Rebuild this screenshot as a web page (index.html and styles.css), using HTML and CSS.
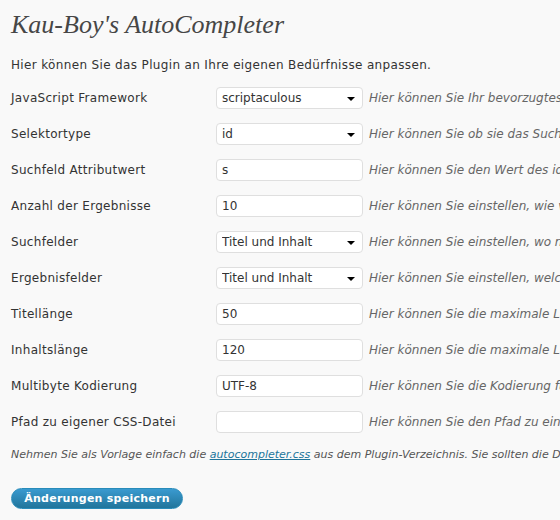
FILE: index.html
```html
<!DOCTYPE html>
<html lang="de">
  <head>
    <meta charset="UTF-8" />
    <meta name="viewport" content="width=device-width, initial-scale=1.0" />
    <title>Kau-Boy's AutoCompleter</title>
    <link rel="stylesheet" href="styles.css">
  </head>
  <body>
    <div class="wrap">
      <h2 class="title">Kau-Boy's AutoCompleter</h2>
      <p class="intro">Hier können Sie das Plugin an Ihre eigenen Bedürfnisse anpassen.</p>
      <form class="options">
        <div class="row">
          <label class="label">JavaScript Framework</label>
          <span class="select">
            <select><option>scriptaculous</option><option>jQuery</option></select>
          </span>
          <span class="desc">Hier können Sie Ihr bevorzugtes JavaScript Framework auswählen.</span>
        </div>
        <div class="row">
          <label class="label">Selektortype</label>
          <span class="select">
            <select><option>id</option><option>name</option></select>
          </span>
          <span class="desc">Hier können Sie ob sie das Suchfeld über die ID oder den Namen finden wollen.</span>
        </div>
        <div class="row">
          <label class="label">Suchfeld Attributwert</label>
          <input class="text" type="text" value="s" />
          <span class="desc">Hier können Sie den Wert des id-Attributs Ihres Suchfeldes eintragen.</span>
        </div>
        <div class="row">
          <label class="label">Anzahl der Ergebnisse</label>
          <input class="text" type="text" value="10" />
          <span class="desc">Hier können Sie einstellen, wie viele Ergebnisse angezeigt werden sollen.</span>
        </div>
        <div class="row">
          <label class="label">Suchfelder</label>
          <span class="select">
            <select><option>Titel und Inhalt</option><option>Titel</option></select>
          </span>
          <span class="desc">Hier können Sie einstellen, wo nach dem Suchbegriff gesucht werden soll.</span>
        </div>
        <div class="row">
          <label class="label">Ergebnisfelder</label>
          <span class="select">
            <select><option>Titel und Inhalt</option><option>Titel</option></select>
          </span>
          <span class="desc">Hier können Sie einstellen, welche Felder angezeigt werden sollen.</span>
        </div>
        <div class="row">
          <label class="label">Titellänge</label>
          <input class="text" type="text" value="50" />
          <span class="desc">Hier können Sie die maximale Länge des Titels einstellen.</span>
        </div>
        <div class="row">
          <label class="label">Inhaltslänge</label>
          <input class="text" type="text" value="120" />
          <span class="desc">Hier können Sie die maximale Länge des Inhalts einstellen.</span>
        </div>
        <div class="row">
          <label class="label">Multibyte Kodierung</label>
          <input class="text" type="text" value="UTF-8" />
          <span class="desc">Hier können Sie die Kodierung für die Multibyte-Funktionen einstellen.</span>
        </div>
        <div class="row">
          <label class="label">Pfad zu eigener CSS-Datei</label>
          <input class="text" type="text" value="" />
          <span class="desc">Hier können Sie den Pfad zu einer eigenen CSS-Datei angeben.</span>
        </div>
        <p class="note">Nehmen Sie als Vorlage einfach die <a href="#">autocompleter.css</a> aus dem Plugin-Verzeichnis. Sie sollten die Datei kopieren.</p>
        <button class="button-primary" type="button">Änderungen speichern</button>
      </form>
    </div>
  </body>
</html>
```

FILE: styles.css
```css
* {
  margin: 0;
  padding: 0;
  box-sizing: border-box;
}
body {
  background-color: #f9f9f9;
  color: #333;
  font-family: "DejaVu Sans", Verdana, sans-serif;
  font-size: 12px;
  overflow: hidden;
}
.wrap {
  padding: 0 11px;
  white-space: nowrap;
}
.title {
  font-family: "Liberation Serif", Georgia, serif;
  font-style: italic;
  font-weight: normal;
  font-size: 26px;
  color: #464646;
  padding-top: 10px;
  height: 50px;
}
.intro {
  height: 30px;
  line-height: 30px;
  letter-spacing: 0.35px;
}
.row {
  display: flex;
  align-items: center;
  height: 36px;
}
.label {
  width: 205px;
  flex-shrink: 0;
  letter-spacing: 0.3px;
}
.text,
.select select {
  width: 147px;
  height: 22px;
  border: 1px solid #dfdfdf;
  border-radius: 4px;
  background-color: #fff;
  font-family: inherit;
  font-size: 12px;
  color: #333;
  padding: 0 5px;
  outline: none;
}
.select {
  position: relative;
  flex-shrink: 0;
}
.select select {
  display: block;
  appearance: none;
  -webkit-appearance: none;
}
.select::after {
  content: "";
  position: absolute;
  right: 8px;
  top: 10px;
  border-left: 4px solid transparent;
  border-right: 4px solid transparent;
  border-top: 4px solid #000;
}
.text {
  flex-shrink: 0;
}
.desc {
  margin-left: 6px;
  font-style: italic;
  color: #666;
}
.note {
  font-size: 11px;
  font-style: italic;
  color: #555;
  height: 30px;
  line-height: 30px;
}
.note a {
  color: #21759b;
}
.button-primary {
  margin-top: 18px;
  width: 172px;
  height: 21px;
  border: 1px solid #298cba;
  border-radius: 11px;
  background: linear-gradient(#3a9ad0, #21759b);
  color: #fff;
  font-family: inherit;
  font-weight: bold;
  font-size: 11px;
  letter-spacing: 0.25px;
}
```
